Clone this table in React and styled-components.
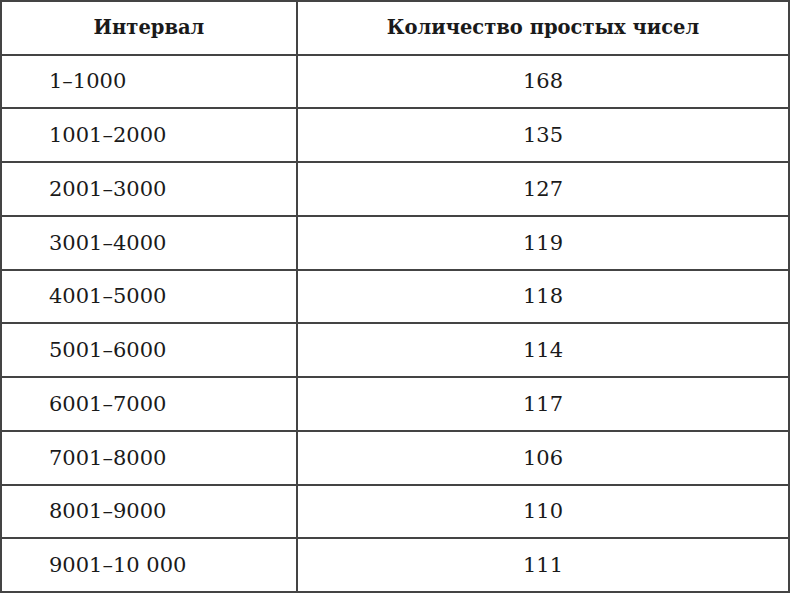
import React from 'react'
import styled, { createGlobalStyle } from 'styled-components'

const GlobalStyle = createGlobalStyle`
	html, body {
		margin: 0;
		padding: 0;
		background: #fff;
	}
`

const Table = styled.table`
	width: 790px;
	height: 593px;
	border-collapse: collapse;
	table-layout: fixed;
	box-sizing: border-box;
	border: 2px solid #111;
	font-family: 'DejaVu Serif', 'Liberation Serif', serif;
	color: #1a1a1a;
`

const Row = styled.tr`
	height: ${p => p.h}px;
`

const HeadCell = styled.th`
	border: 2px solid #444;
	font-size: 19.5px;
	font-weight: bold;
	text-align: center;
	padding: 0;
	width: ${p => p.w || 'auto'};
`

const Cell = styled.td`
	border: 2px solid #444;
	font-size: 21px;
	font-weight: normal;
	padding: 0 0 0 ${p => (p.center ? '0' : '47px')};
	text-align: ${p => (p.center ? 'center' : 'left')};
`

const rows = [
	['1–1000', '168'],
	['1001–2000', '135'],
	['2001–3000', '127'],
	['3001–4000', '119'],
	['4001–5000', '118'],
	['5001–6000', '114'],
	['6001–7000', '117'],
	['7001–8000', '106'],
	['8001–9000', '110'],
	['9001–10 000', '111'],
]

export default function App() {
	return (
		<>
			<GlobalStyle />
			<Table>
				<thead>
					<Row h={53.5}>
						<HeadCell w="294px">Интервал</HeadCell>
						<HeadCell>Количество простых чисел</HeadCell>
					</Row>
				</thead>
				<tbody>
					{rows.map(([range, count]) => (
						<Row h={53.6} key={range}>
							<Cell>{range}</Cell>
							<Cell center>{count}</Cell>
						</Row>
					))}
				</tbody>
			</Table>
		</>
	)
}
